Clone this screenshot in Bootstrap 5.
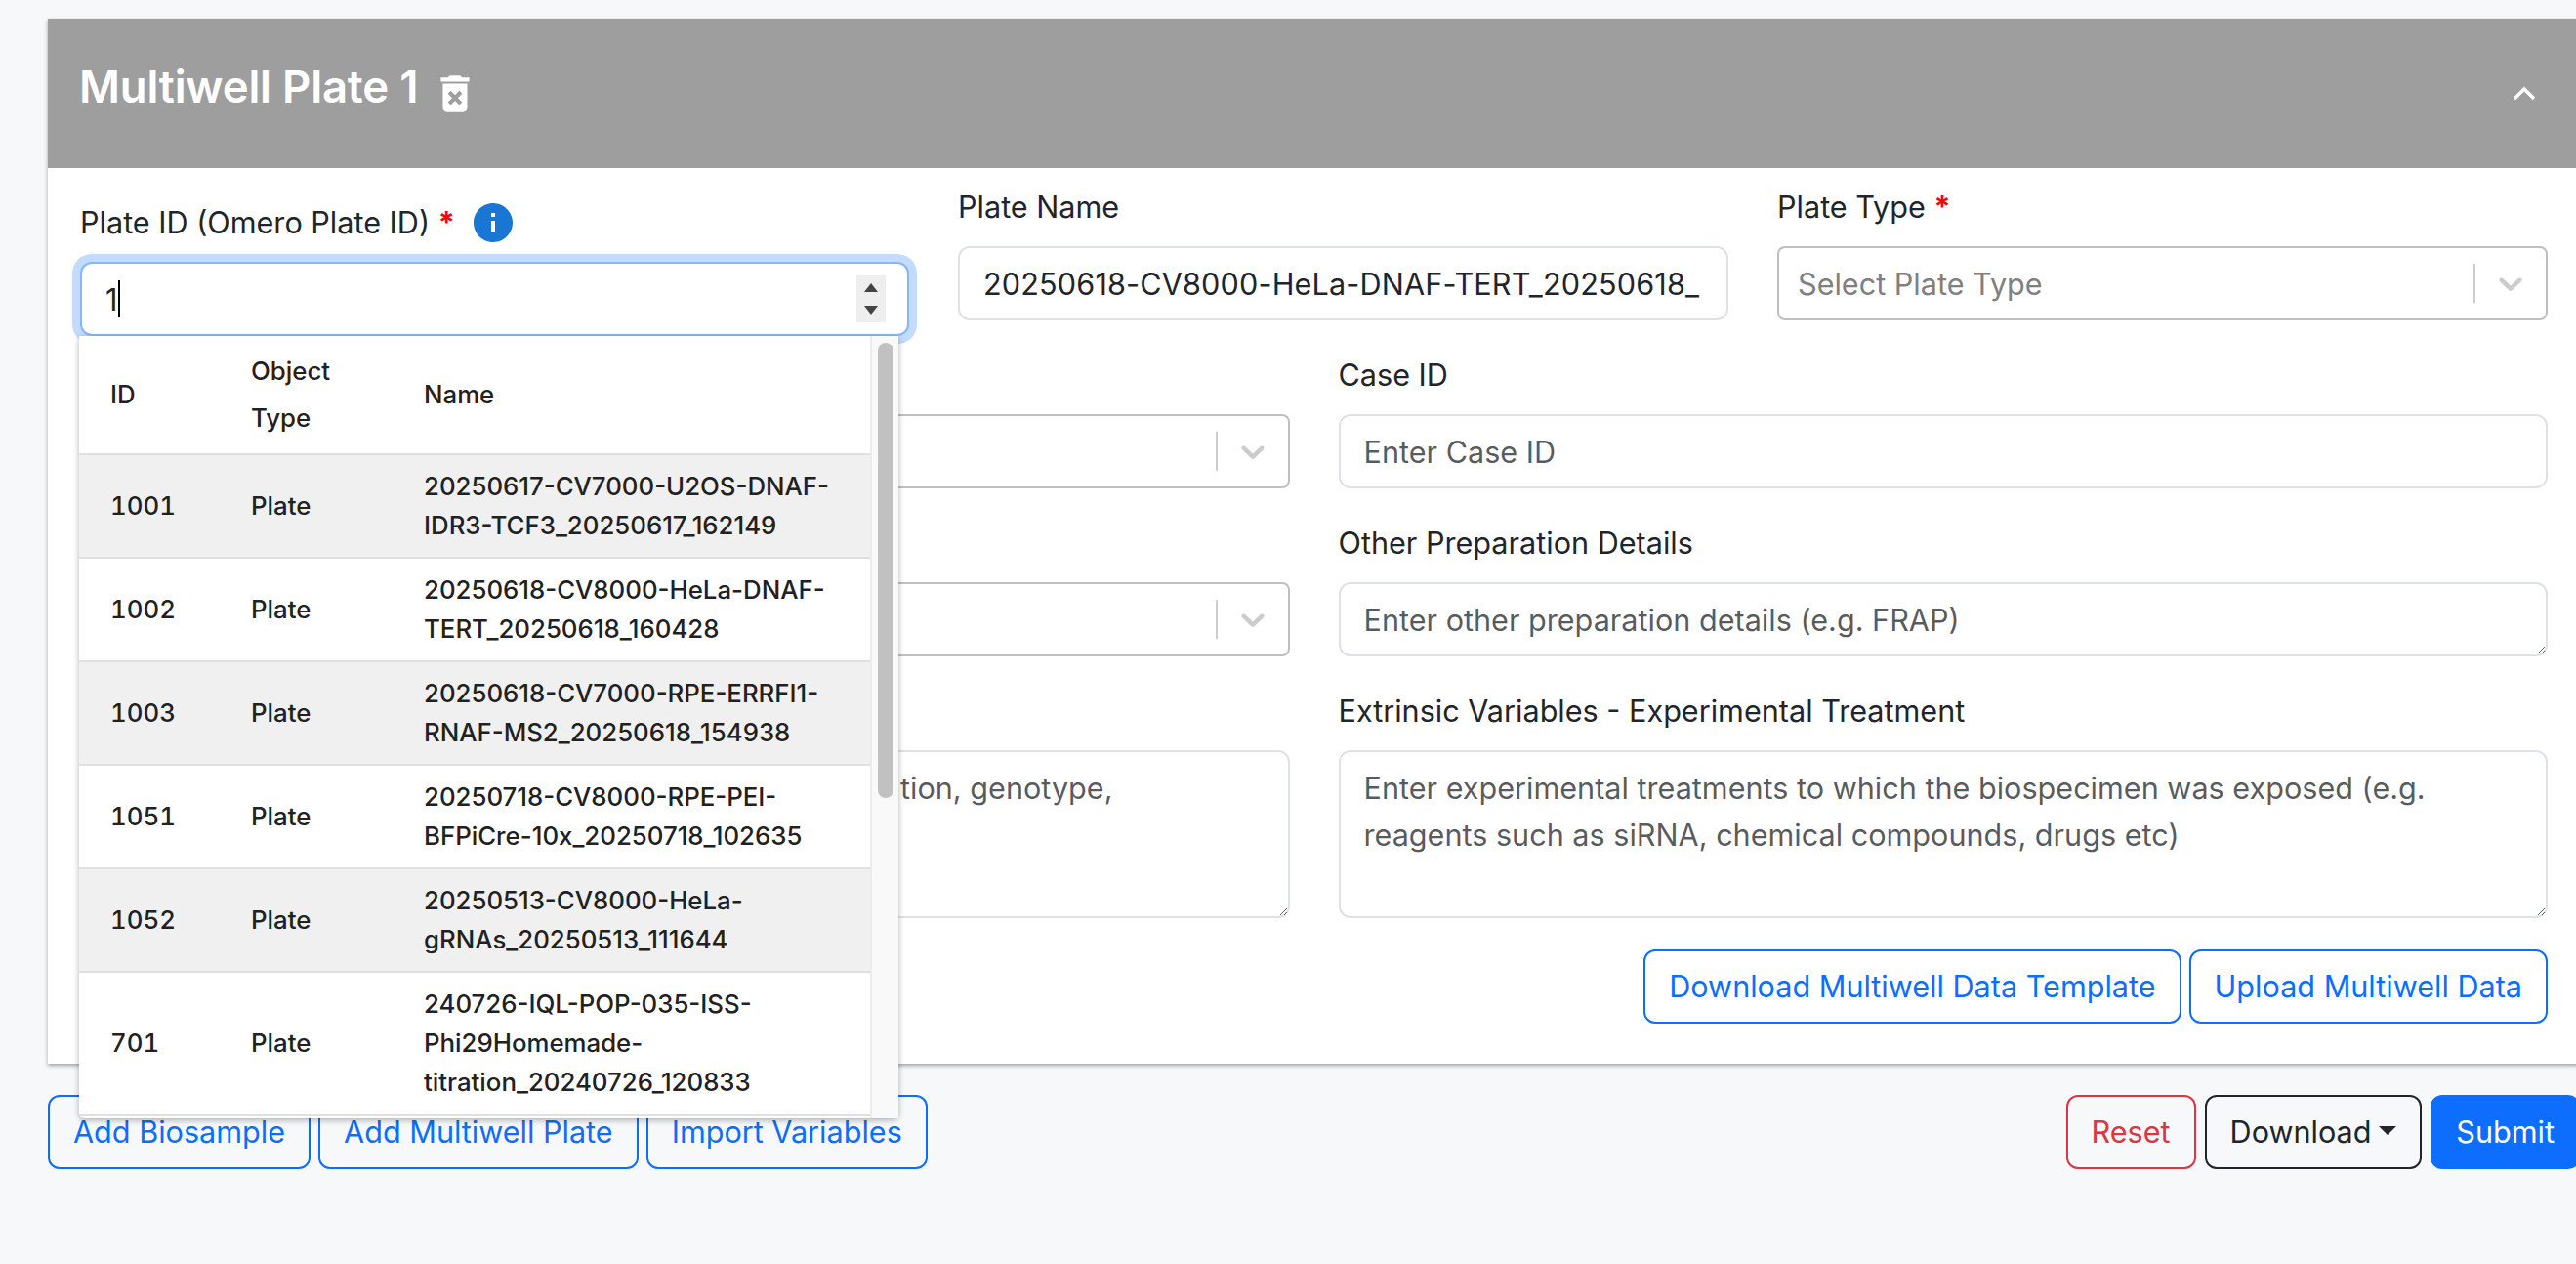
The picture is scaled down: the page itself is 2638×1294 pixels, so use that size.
<!DOCTYPE html>
<html lang="en">
<head>
  <meta charset="UTF-8" />
  <title>Multiwell Plate</title>
  <link href="https://cdn.jsdelivr.net/npm/bootstrap@5.3.2/dist/css/bootstrap.min.css" rel="stylesheet">
  <style>
    /* screenshot is a 2x retina capture, so scale the rem base instead of every value */
    html { font-size: 32px; }
    :root { --bs-border-width: 2px; --bs-body-font-family: Inter, "Liberation Sans", sans-serif; }
    body { overflow: hidden; height: 1294px; font-size: 30.6px; line-height: 48px; background: #f7f8fa; }
    .form-control, .btn, .plate-select { font-size: 30.6px; line-height: 48px; }
    .form-control { padding-top: 13px; padding-bottom: 11px; }
    .name-input { letter-spacing: .15px; }
    .page-wrap { width: 2593px; margin: 19px 0 0 49px; }
    .plate-card { border: 0; border-radius: 0; box-shadow: 0 2px 4px rgba(0,0,0,.35); background: #fff; }
    .plate-head { height: 153px; padding: 0 33px; background: #9e9e9e; color: #fff; border: 0; border-radius: 0 !important; }
    .plate-title { font-size: 45.5px; font-weight: 600; margin: 0 0 0 -1px; letter-spacing: -.2px; position: relative; top: -6px; }
    .plate-body { padding: 16px 33px 41px 33px; }
    .top-row { display: flex; gap: 50px; }
    .top-id { flex: 0 0 849px; }
    .top-other { flex: 1 1 0; min-width: 0; }
    .form-label { margin-bottom: 16px; }
    .id-label { height: 64px; display: flex; align-items: flex-end; }
    .id-label-inner { display: flex; align-items: center; height: 48px; }
    .req { color: #f00; font-weight: 700; }
    .info-icon { width: 48px; height: 48px; fill: #1976d2; margin-left: 15px; }
    .row-gap50 { --bs-gutter-x: 50px; }
    .id-wrap { position: relative; }
    .id-input { border-color: #86b7fe; box-shadow: 0 0 0 8px rgba(13,110,253,.25); }
    .id-caret { position: absolute; left: 39px; top: 19px; width: 2px; height: 38px; background: #000; }
    .id-spin { position: absolute; right: 24px; top: 14px; width: 30px; height: 48px; background: #eee; display: flex; flex-direction: column; align-items: center; justify-content: center; gap: 14px; }
    .id-spin i { width: 0; height: 0; border-left: 7px solid transparent; border-right: 7px solid transparent; }
    .spin-up { border-bottom: 9px solid #444; }
    .spin-down { border-top: 9px solid #444; }
    .id-menu { position: absolute; z-index: 10; left: -1px; top: 100%; width: 839px; height: 801px; background: #fff; display: flex; box-shadow: 0 2px 6px rgba(0,0,0,.3); border-radius: 0 0 6px 6px; }
    .id-menu-list { flex: 1 1 auto; overflow: hidden; }
    .id-menu-track { flex: 0 0 29px; position: relative; background: #f9f9f9; border-left: 2px solid #ececec; }
    .id-menu-thumb { position: absolute; left: 6px; top: 7px; width: 16px; height: 466px; border-radius: 8px; background: #c1c1c1; }
    .id-table { width: 100%; border-collapse: collapse; table-layout: fixed; font-size: 25.8px; font-weight: 550; color: #212121; }
    .id-table th, .id-table td { padding: 12px 32px; vertical-align: middle; border-bottom: 2px solid #e0e0e0; }
    .id-table th:last-child, .id-table td:last-child { padding-right: 6px; }
    .id-table td:first-child { font-variant-numeric: tabular-nums; }
    .id-table th { font-weight: 550; line-height: 48px; }
    .id-table td { line-height: 40px; }
    .id-table tbody tr:nth-child(odd) { background: #f0f0f0; }
    .plate-select { height: 76px; background: #fff; border: 2px solid #bfbfbf; border-radius: 8px; display: flex; align-items: center; padding-left: 19px; color: #808080; }
    .plate-select span { flex: 1 1 auto; padding-top: 2px; }
    .select-sep { width: 2px; height: 40px; background: #ccc; }
    .select-arrow { width: 40px; height: 40px; fill: #ccc; margin: 0 16px; flex: none; }
    textarea.form-control { resize: vertical; }
    .trash-icon { width: 50px; height: 50px; fill: #fff; margin-left: 13px; }
    .head-chevron { width: 28px; height: 18px; stroke: #fff; stroke-width: 3.5; fill: none; margin-right: 10px; }
    .foot-btns { gap: 9px; }
  </style>
</head>
<body>
  <div class="page-wrap">
    <div class="card plate-card">
      <div class="card-header plate-head d-flex align-items-center justify-content-between">
        <div class="d-flex align-items-center">
          <h4 class="plate-title">Multiwell Plate 1</h4>
          <svg class="trash-icon" viewBox="0 0 24 24"><path d="M6 19c0 1.1.9 2 2 2h8c1.1 0 2-.9 2-2V7H6v12zm2.46-7.12 1.41-1.41L12 12.59l2.12-2.12 1.41 1.41L13.41 14l2.12 2.12-1.41 1.41L12 15.41l-2.12 2.12-1.41-1.41L10.59 14l-2.13-2.12zM15.5 4l-1-1h-5l-1 1H5v2h14V4z"/></svg>
        </div>
        <svg class="head-chevron" viewBox="0 0 28 18"><path d="M4 14 14 4l10 10"/></svg>
      </div>
      <div class="card-body plate-body">
        <div class="top-row mb-2">
          <div class="top-id">
            <label class="form-label id-label">
              <span class="id-label-inner">Plate ID (Omero Plate ID)&nbsp;<span class="req">*</span>
                <svg class="info-icon" viewBox="0 0 24 24"><path d="M12 2C6.48 2 2 6.48 2 12s4.48 10 10 10 10-4.48 10-10S17.52 2 12 2zm1 15h-2v-6h2v6zm0-8h-2V7h2v2z"/></svg>
              </span>
            </label>
            <div class="id-wrap">
              <input type="text" class="form-control id-input" value="1">
              <span class="id-caret"></span>
              <div class="id-spin"><i class="spin-up"></i><i class="spin-down"></i></div>
              <div class="id-menu">
                <div class="id-menu-list">
                  <table class="id-table">
                    <colgroup><col style="width:144px"><col style="width:177px"><col></colgroup>
                    <thead><tr><th>ID</th><th>Object Type</th><th>Name</th></tr></thead>
                    <tbody>
                      <tr><td>1001</td><td>Plate</td><td>20250617-CV7000-U2OS-DNAF-IDR3-TCF3_20250617_162149</td></tr>
                      <tr><td>1002</td><td>Plate</td><td>20250618-CV8000-HeLa-DNAF-TERT_20250618_160428</td></tr>
                      <tr><td>1003</td><td>Plate</td><td>20250618-CV7000-RPE-ERRFI1-RNAF-MS2_20250618_154938</td></tr>
                      <tr><td>1051</td><td>Plate</td><td>20250718-CV8000-RPE-PEI-BFPiCre-10x_20250718_102635</td></tr>
                      <tr><td>1052</td><td>Plate</td><td>20250513-CV8000-HeLa-gRNAs_20250513_111644</td></tr>
                      <tr><td>701</td><td>Plate</td><td>240726-IQL-POP-035-ISS-Phi29Homemade-titration_20240726_120833</td></tr>
                    </tbody>
                  </table>
                </div>
                <div class="id-menu-track"><div class="id-menu-thumb"></div></div>
              </div>
            </div>
          </div>
          <div class="top-other">
            <label class="form-label">Plate Name</label>
            <input type="text" class="form-control name-input" value="20250618-CV8000-HeLa-DNAF-TERT_20250618_">
          </div>
          <div class="top-other">
            <label class="form-label">Plate Type <span class="req">*</span></label>
            <div class="plate-select"><span>Select Plate Type</span><div class="select-sep"></div>
              <svg class="select-arrow" viewBox="0 0 20 20"><path d="M4.516 7.548c0.436-0.446 1.043-0.481 1.576 0l3.908 3.747 3.908-3.747c0.533-0.481 1.141-0.446 1.574 0 0.436 0.445 0.408 1.197 0 1.615-0.406 0.418-4.695 4.502-4.695 4.502-0.217 0.223-0.502 0.335-0.787 0.335s-0.57-0.112-0.789-0.335c0 0-4.287-4.084-4.695-4.502s-0.436-1.17 0-1.615z"/></svg>
            </div>
          </div>
        </div>

        <div class="row row-gap50">
          <div class="col-6 mb-3">
            <label class="form-label">Preparation Method</label>
            <div class="plate-select"><span>Select</span><div class="select-sep"></div>
              <svg class="select-arrow" viewBox="0 0 20 20"><path d="M4.516 7.548c0.436-0.446 1.043-0.481 1.576 0l3.908 3.747 3.908-3.747c0.533-0.481 1.141-0.446 1.574 0 0.436 0.445 0.408 1.197 0 1.615-0.406 0.418-4.695 4.502-4.695 4.502-0.217 0.223-0.502 0.335-0.787 0.335s-0.57-0.112-0.789-0.335c0 0-4.287-4.084-4.695-4.502s-0.436-1.17 0-1.615z"/></svg>
            </div>
          </div>
          <div class="col-6 mb-3">
            <label class="form-label">Case ID</label>
            <input type="text" class="form-control" placeholder="Enter Case ID">
          </div>
          <div class="col-6 mb-3">
            <label class="form-label">Preparation Type</label>
            <div class="plate-select"><span>Select</span><div class="select-sep"></div>
              <svg class="select-arrow" viewBox="0 0 20 20"><path d="M4.516 7.548c0.436-0.446 1.043-0.481 1.576 0l3.908 3.747 3.908-3.747c0.533-0.481 1.141-0.446 1.574 0 0.436 0.445 0.408 1.197 0 1.615-0.406 0.418-4.695 4.502-4.695 4.502-0.217 0.223-0.502 0.335-0.787 0.335s-0.57-0.112-0.789-0.335c0 0-4.287-4.084-4.695-4.502s-0.436-1.17 0-1.615z"/></svg>
            </div>
          </div>
          <div class="col-6 mb-3">
            <label class="form-label">Other Preparation Details</label>
            <textarea class="form-control" rows="1" placeholder="Enter other preparation details (e.g. FRAP)"></textarea>
          </div>
          <div class="col-6 mb-3">
            <label class="form-label">Intrinsic Variables</label>
            <textarea class="form-control" rows="3" placeholder="Enter the intrinsic variations of a biospecimen (e.g. mutation, genotype, differentiation etc)"></textarea>
          </div>
          <div class="col-6 mb-3">
            <label class="form-label">Extrinsic Variables - Experimental Treatment</label>
            <textarea class="form-control" rows="3" placeholder="Enter experimental treatments to which the biospecimen was exposed (e.g. reagents such as siRNA, chemical compounds, drugs etc)"></textarea>
          </div>
        </div>

        <div class="d-flex justify-content-end gap-1">
          <button type="button" class="btn btn-outline-primary">Download Multiwell Data Template</button>
          <button type="button" class="btn btn-outline-primary">Upload Multiwell Data</button>
        </div>
      </div>
    </div>

    <div class="d-flex justify-content-between mt-3">
      <div class="d-flex gap-1">
        <button type="button" class="btn btn-outline-primary">Add Biosample</button>
        <button type="button" class="btn btn-outline-primary">Add Multiwell Plate</button>
        <button type="button" class="btn btn-outline-primary">Import Variables</button>
      </div>
      <div class="d-flex foot-btns">
        <button type="button" class="btn btn-outline-danger">Reset</button>
        <button type="button" class="btn btn-outline-dark dropdown-toggle">Download</button>
        <button type="button" class="btn btn-primary">Submit</button>
      </div>
    </div>
  </div>

  <script src="https://cdn.jsdelivr.net/npm/bootstrap@5.3.2/dist/js/bootstrap.bundle.min.js"></script>
</body>
</html>
